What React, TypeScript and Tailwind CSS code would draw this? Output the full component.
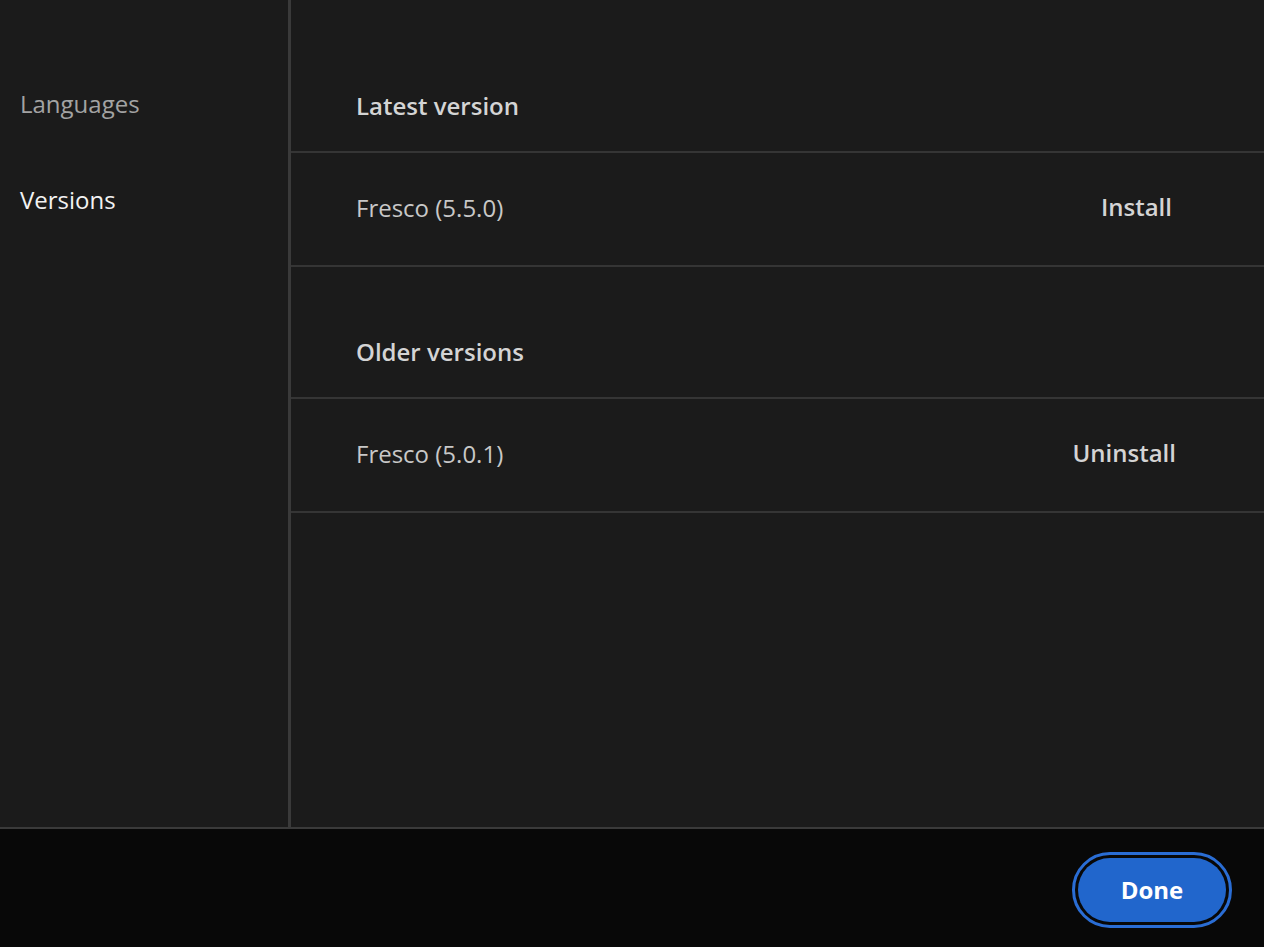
import React from "react";

const font = { fontFamily: '"Open Sans", "Noto Sans", sans-serif' };

export default function App() {
  return (
    <div className="w-[1264px] h-[947px] bg-[#1b1b1b] flex flex-col overflow-hidden" style={font}>
      <div className="flex h-[827px]">
        <aside className="w-[291px] shrink-0 border-r-[3px] border-[#3a3a3a] pt-[87px] pl-[20px]">
          <div className="text-[24px] leading-[34px] text-[#a3a3a3]">Languages</div>
          <div className="mt-[62px] text-[24px] leading-[34px] text-[#f2f2f2]">Versions</div>
        </aside>
        <main className="flex-1 flex flex-col">
          <div className="h-[153px] flex items-end pb-[28px] pl-[65px] border-b-2 border-[#353535]">
            <span className="text-[24px] leading-[34px] font-semibold text-[#d4d4d4]">Latest version</span>
          </div>
          <div className="h-[114px] flex items-center justify-between pl-[65px] pr-[92px] border-b-2 border-[#353535]">
            <span className="text-[24px] leading-[34px] text-[#c8c8c8] mb-[2px]">Fresco (5.5.0)</span>
            <span className="text-[24px] leading-[34px] font-semibold text-[#d4d4d4] mb-[4px]">Install</span>
          </div>
          <div className="h-[132px] flex items-end pb-[28px] pl-[65px] border-b-2 border-[#353535]">
            <span className="text-[24px] leading-[34px] font-semibold text-[#d4d4d4]">Older versions</span>
          </div>
          <div className="h-[114px] flex items-center justify-between pl-[65px] pr-[88px] border-b-2 border-[#353535]">
            <span className="text-[24px] leading-[34px] text-[#c8c8c8] mb-[2px]">Fresco (5.0.1)</span>
            <span className="text-[24px] leading-[34px] font-semibold text-[#d4d4d4] mb-[5px]">Uninstall</span>
          </div>
        </main>
      </div>
      <footer className="flex-1 bg-[#080808] border-t-2 border-[#3a3a3a] flex items-start justify-end pt-[23px] pr-[32px]">
        <div className="rounded-full border-[3px] border-[#2a6dd4] p-[3px]">
          <button className="w-[148px] h-[64px] rounded-full bg-[#2166cc] text-white text-[24px] font-bold" style={font}>
            Done
          </button>
        </div>
      </footer>
    </div>
  );
}
